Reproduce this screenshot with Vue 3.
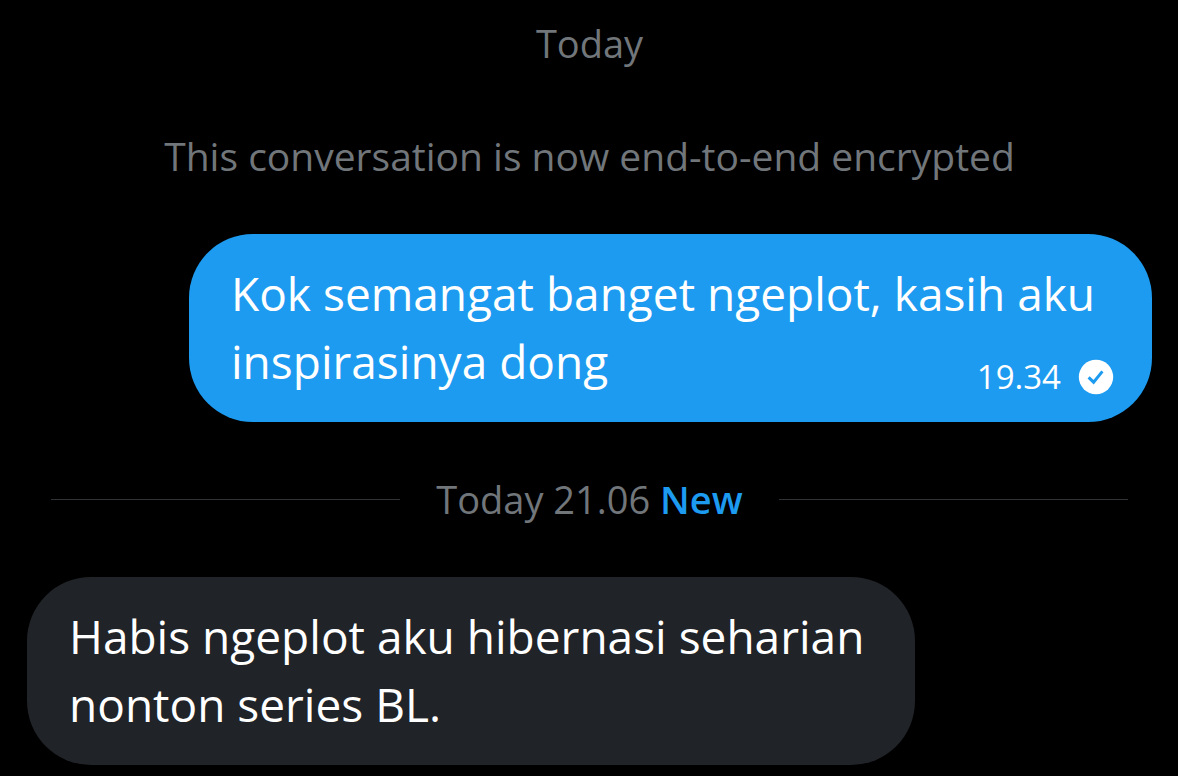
<script setup>
const sent = ['Kok semangat banget ngeplot, kasih aku', 'inspirasinya dong']
const received = 'Habis ngeplot aku hibernasi seharian nonton series BL.'
</script>

<template>
  <main class="chat">
    <p class="note">Today</p>
    <p class="note notice">This conversation is now end-to-end encrypted</p>
    <article class="bubble sent">
      <p class="message">{{ sent[0] }}</p>
      <div class="last-line">
        <p class="message">{{ sent[1] }}</p>
        <div class="meta">
          <time>19.34</time>
          <svg class="check" viewBox="0 0 36 36" role="img" aria-label="Delivered">
            <circle cx="18" cy="18" r="17.2" fill="#fff" />
            <path d="M10.6 18.4l5 4.8L24.4 12.4" fill="none" stroke="#1d9bf0" stroke-width="3" />
          </svg>
        </div>
      </div>
    </article>
    <div class="divider">
      <span class="rule"></span>
      <p class="note">Today 21.06 <strong>New</strong></p>
      <span class="rule"></span>
    </div>
    <article class="bubble received">
      <p class="message">{{ received }}</p>
    </article>
  </main>
</template>

<style>
body {
  margin: 0;
  background: #000;
}
</style>

<style scoped>
.chat {
  display: flex;
  flex-direction: column;
  padding: 19px 26px 11px 27px;
  font-family: "Open Sans", "Noto Sans", sans-serif;
}
p {
  margin: 0;
}
.note {
  color: #71767b;
  font-size: 38px;
  line-height: 48px;
  text-align: center;
}
.notice {
  margin-top: 65px;
  font-size: 39px;
}
.bubble {
  box-sizing: border-box;
  max-width: 100%;
  padding: 25px 38px 27px 42px;
  border-radius: 64px;
  color: #fff;
}
.sent {
  align-self: flex-end;
  width: 963px;
  margin-top: 54px;
  background: #1d9bf0;
}
.received {
  align-self: flex-start;
  width: 888px;
  margin-top: 54px;
  background: #202327;
}
.message {
  font-size: 46px;
  line-height: 68px;
}
.last-line {
  display: flex;
  align-items: flex-end;
  justify-content: space-between;
}
.meta {
  display: flex;
  align-items: center;
  gap: 17px;
  font-size: 33px;
  line-height: 36px;
}
.check {
  width: 36px;
  height: 36px;
}
.divider {
  display: flex;
  align-items: center;
  gap: 36px;
  margin: 53px 24px 0;
}
.rule {
  flex: 1;
  height: 1px;
  background: #2f3336;
}
strong {
  color: #1d9bf0;
  font-weight: 600;
}
</style>
